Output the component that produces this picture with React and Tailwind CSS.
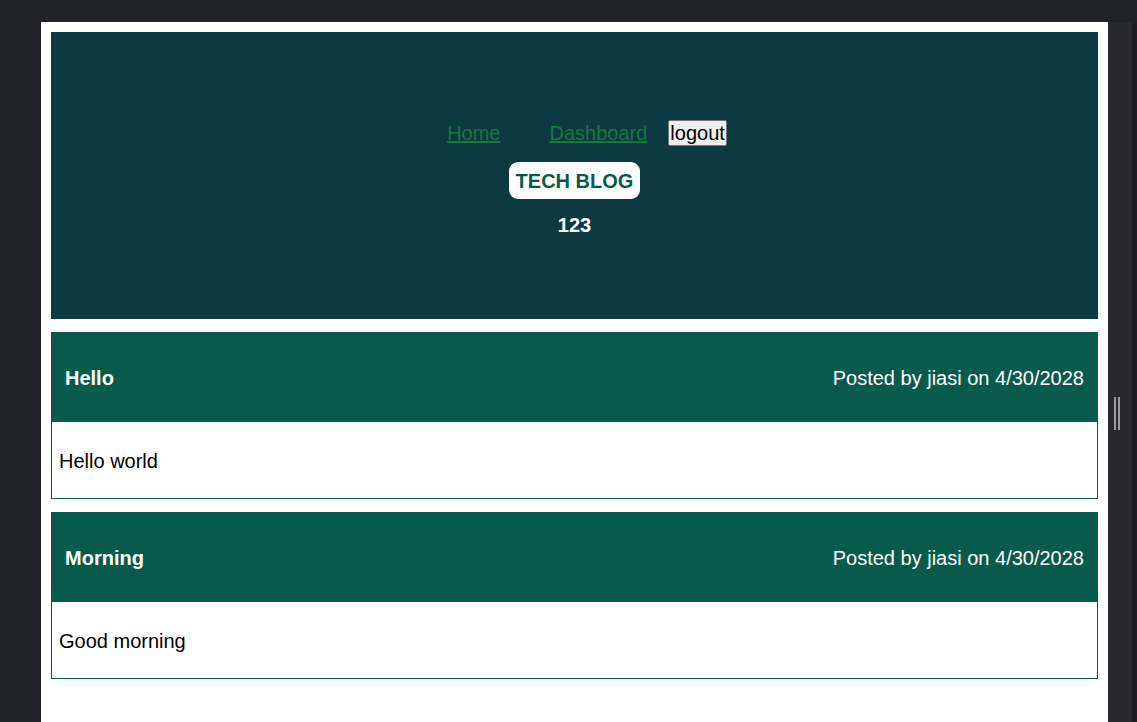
export default function App() {
  const posts = [
    { title: "Hello", body: "Hello world" },
    { title: "Morning", body: "Good morning" },
  ];
  return (
    <div
      className="h-[722px] w-[1137px] overflow-hidden bg-[#202124] flex flex-col"
      style={{ fontFamily: '"Liberation Sans", Arial, sans-serif' }}
    >
      <div className="h-[22px] shrink-0" />
      <div className="flex flex-1">
        <div className="w-[41px] shrink-0" />
        <div className="w-[1067px] shrink-0 bg-white p-[10px] flex flex-col gap-[13px]">
          <header className="h-[287px] bg-[#0d3940] flex flex-col items-center pt-[88px]">
            <nav className="flex items-center pl-[25px] text-[20px] leading-[26px]">
              <a href="#" className="text-[#137a3c] underline">Home</a>
              <a href="#" className="text-[#137a3c] underline ml-[49px]">Dashboard</a>
              <button className="ml-[21px] h-[26px] px-[1px] bg-[#efefef] border border-[#767676] rounded-[2px] text-black text-[20px] leading-[22px]">
                logout
              </button>
            </nav>
            <div className="mt-[16px] h-[37px] px-[7px] rounded-[9px] bg-white flex items-center text-[#085a4a] font-bold text-[20px]">
              TECH BLOG
            </div>
            <div className="mt-[14px] text-white font-bold text-[20px] leading-[24px]">123</div>
          </header>
          {posts.map((p) => (
            <section key={p.title} className="flex flex-col">
              <div className="h-[90px] bg-[#085a4a] flex items-center justify-between px-[14px] pt-[2px] text-white text-[20px]">
                <span className="font-bold">{p.title}</span>
                <span>Posted by jiasi on 4/30/2028</span>
              </div>
              <div className="h-[77px] border border-t-0 border-[#085a4a] flex items-center px-[7px] pt-[2px] text-black text-[20px]">
                {p.body}
              </div>
            </section>
          ))}
        </div>
        <div className="w-[24px] shrink-0 bg-[#28292c] flex items-start justify-center pt-[375px]">
          <div className="flex gap-[2px] ml-[-6px]">
            <div className="w-[2px] h-[33px] bg-[#9a9a9a]" />
            <div className="w-[2px] h-[33px] bg-[#9a9a9a]" />
          </div>
        </div>
        <div className="flex-1 bg-[#1f1f21]" />
      </div>
    </div>
  );
}
